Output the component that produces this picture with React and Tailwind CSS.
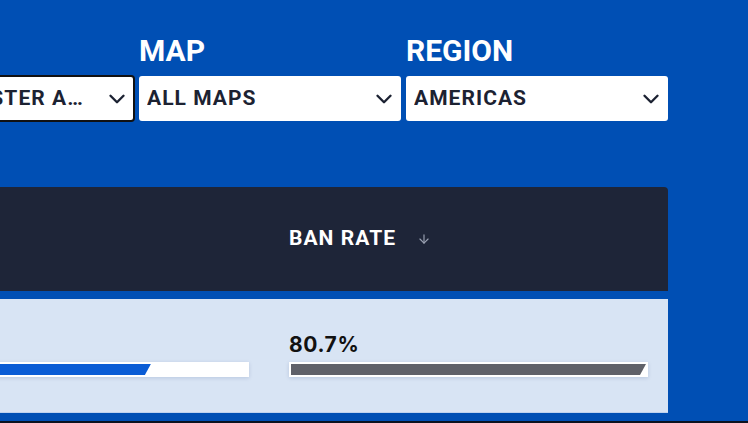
import { ChevronDown, ArrowDown } from "lucide-react";

const filters = [
  { label: "RANK", value: "GRANDMASTER AND ABOVE", focused: true },
  { label: "MAP", value: "ALL MAPS" },
  { label: "REGION", value: "AMERICAS" },
];

function Select({ label, value, focused }) {
  return (
    <div className="w-[262px] shrink-0">
      <div className="mb-[10px] text-[30px] leading-none font-bold text-white">{label}</div>
      <button
        className={`flex h-[45px] w-full items-center rounded-[3px] bg-white pl-[8px] pr-[4px] text-left text-[21px] font-bold tracking-[0.05em] text-[#1c2232] ${
          focused ? "outline-2 -outline-offset-1 outline-[#111]" : ""
        }`}
      >
        <span className={`min-w-0 flex-1 truncate ${focused ? "mr-[8px]" : ""}`}>{value}</span>
        <ChevronDown size={26} strokeWidth={2.2} className="shrink-0" />
      </button>
    </div>
  );
}

function Bar({ pct, color }) {
  return (
    <div className="h-[15px] w-full bg-white p-[2px] shadow-[0_1px_4px_rgba(0,40,110,0.15)]">
      <div
        className={`h-full ${color} [clip-path:polygon(0_0,100%_0,calc(100%_-_6px)_100%,0_100%)]`}
        style={{ width: `${pct}%` }}
      />
    </div>
  );
}

export default function App() {
  return (
    <div
      className="h-[423px] overflow-hidden border-b-2 border-[#0b1220] bg-[#004fb4]"
      style={{ fontFamily: "Roboto, 'Liberation Sans', sans-serif" }}
    >
      <div className="-ml-[532px] w-[1200px] pt-[36px]">
        {/* filters */}
        <div className="flex justify-end gap-[5px]">
          {filters.map((f) => (
            <Select key={f.label} {...f} />
          ))}
        </div>

        {/* stats table */}
        <div className="mt-[66px]">
          <div className="flex h-[104px] items-center rounded-t-[4px] bg-[#1e2538] text-white">
            <div className="flex-1" />
            <div className="w-[400px]" />
            <div className="flex w-[399px] items-center px-5">
              <span className="text-[21px] font-bold tracking-[0.05em]">BAN RATE</span>
              <ArrowDown size={14} strokeWidth={2} className="ml-[21px] text-[#9aa1b2]" />
            </div>
          </div>

          <div className="mt-[8px] flex h-[114px] items-center border-b border-[#bfd2ee] bg-[#d8e4f4]">
            <div className="flex-1" />
            <div className="w-[400px] px-5">
              <div className="text-[21px] leading-none font-bold tracking-[0.03em] text-[#111]" style={{ fontFamily: "Inter, sans-serif" }}>
                41.3%
              </div>
              <div className="mt-[7px]">
                <Bar pct={73} color="bg-[#0a5cd5]" />
              </div>
            </div>
            <div className="w-[399px] px-5">
              <div className="text-[21px] leading-none font-bold tracking-[0.03em] text-[#111]" style={{ fontFamily: "Inter, sans-serif" }}>
                80.7%
              </div>
              <div className="mt-[7px]">
                <Bar pct={100} color="bg-[#5f6169]" />
              </div>
            </div>
          </div>
        </div>
      </div>
    </div>
  );
}
